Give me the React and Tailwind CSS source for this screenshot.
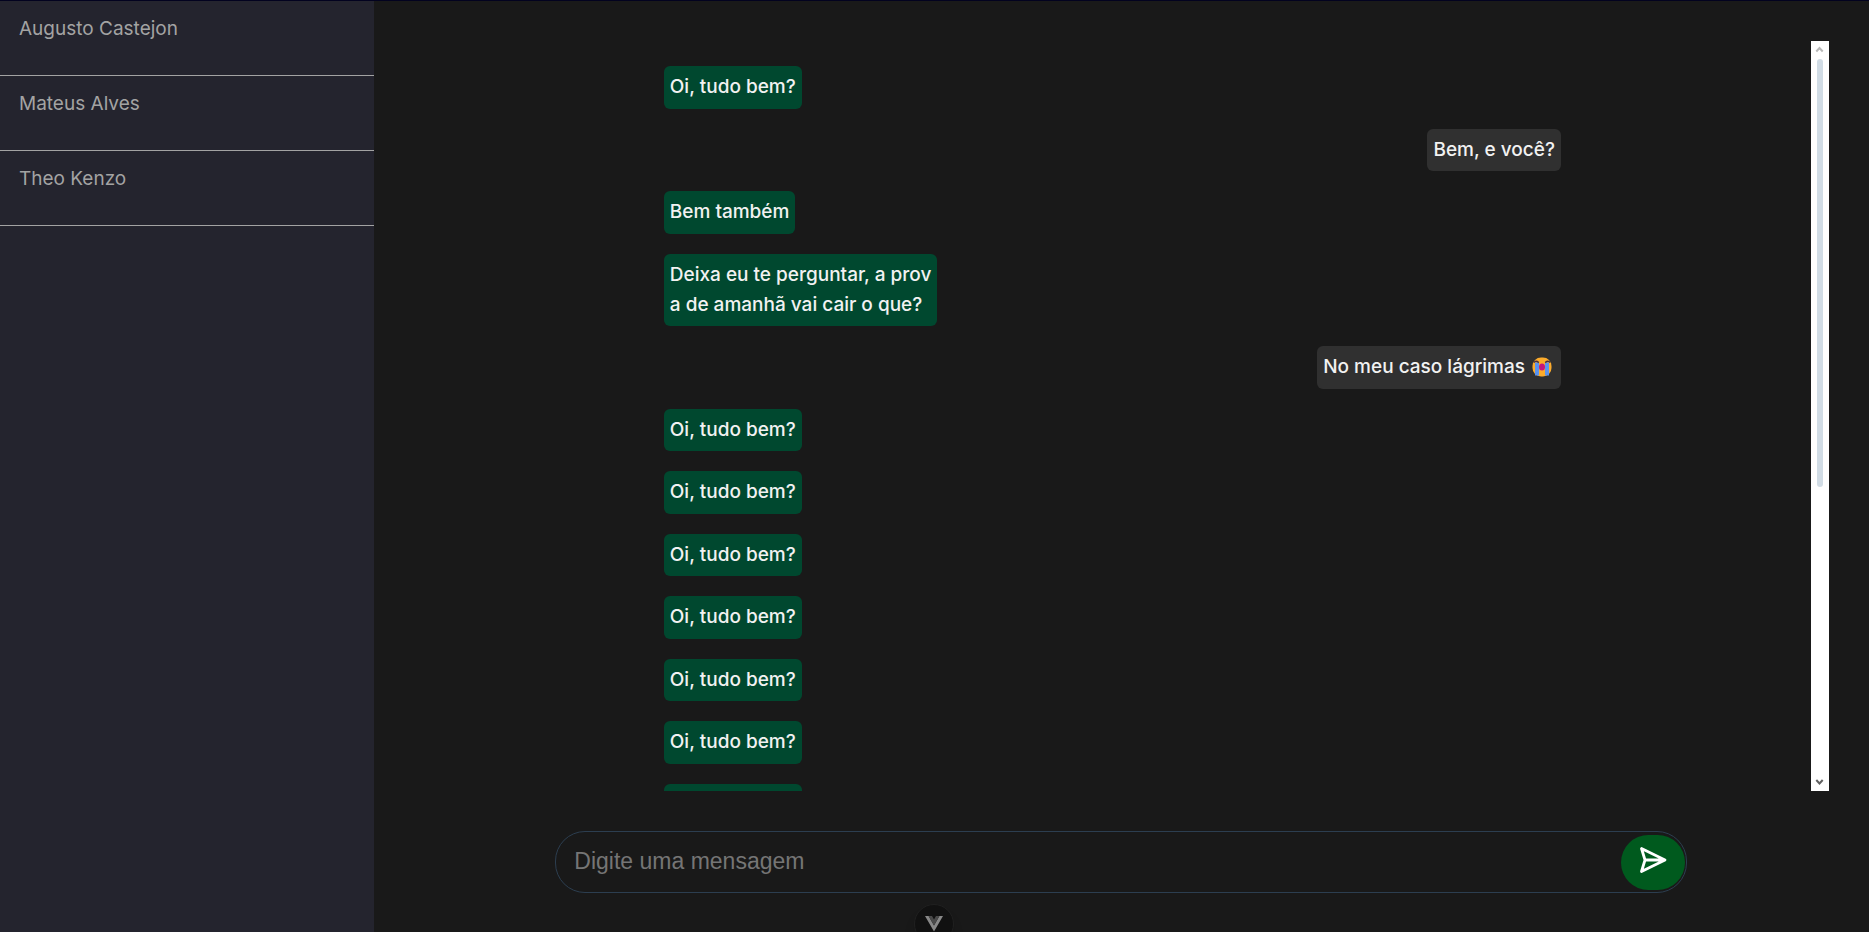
const contacts = ["Augusto Castejon", "Mateus Alves", "Theo Kenzo"];

const messages = [
  { text: "Oi, tudo bem?" },
  { text: "Bem, e você?", mine: true },
  { text: "Bem também" },
  { text: "Deixa eu te perguntar, a prov\na de amanhã vai cair o que?" },
  { text: "No meu caso lágrimas", mine: true, crying: true },
  ...Array.from({ length: 14 }, () => ({ text: "Oi, tudo bem?" })),
];

function CryingFace() {
  return (
    <svg viewBox="0 0 20 20" className="mr-[3px] ml-[7px] inline-block size-5 align-[-4px]" role="img" aria-label="chorando">
      <rect x="0.5" y="0.5" width="19" height="19" rx="8.5" fill="#fbab2c" />
      <rect x="3" y="5.5" width="4" height="13" fill="#5a93ef" />
      <rect x="13" y="5.5" width="4" height="13" fill="#5a93ef" />
      <path d="M1.8 5.6Q3.8 3 6.8 5.6M13.2 5.6Q16.2 3 18.2 5.6" fill="none" stroke="#4a3040" strokeWidth="1.4" />
      <ellipse cx="10" cy="10" rx="3" ry="3.6" fill="#c4177c" />
    </svg>
  );
}

function Scrollbar() {
  return (
    <div aria-hidden="true" className="flex w-[18px] shrink-0 flex-col items-center bg-white">
      <svg viewBox="0 0 18 18" className="size-[18px] shrink-0" fill="none" stroke="#b8b8b8" strokeWidth="2">
        <path d="M5.3 10.5 8.5 7l3.2 3.5" />
      </svg>
      <div className="w-[6px] flex-[3] rounded-full bg-[#d1dce5]" />
      <div className="flex-[2]" />
      <svg viewBox="0 0 18 18" className="size-[18px] shrink-0" fill="none" stroke="#606060" strokeWidth="2">
        <path d="M5.3 7 8.5 10.5 11.7 7" />
      </svg>
    </div>
  );
}

export default function App() {
  return (
    <div className="flex h-screen overflow-hidden border-t border-[#02021f] bg-[#191919] font-['Inter',sans-serif] text-[19px] leading-[30px] font-medium">
      <nav className="w-1/5 shrink-0 bg-[#24242e]">
        <ul>
          {contacts.map((name) => (
            <li key={name}>
              <a href="#" className="block h-[75px] border-b border-[#a3a3a3] px-[19px] pt-[13px] font-normal text-[#a3a3a3]">
                {name}
              </a>
            </li>
          ))}
        </ul>
      </nav>

      <main className="relative flex min-w-0 flex-1 flex-col p-10">
        <section className="flex h-[750px] shrink-0">
          <ul className="flex min-w-0 flex-1 flex-col gap-5 overflow-y-auto px-[250px] py-[25px] [scrollbar-width:none]">
            {messages.map((m, i) => (
              <li
                key={i}
                className={`max-w-[280px] shrink-0 rounded-md px-[6px] pt-[6px] pb-[6px] whitespace-pre-line text-[#f2f2f2] odd:pb-[7px] ${
                  m.mine ? "self-end bg-[#303030]" : "self-start bg-[#00482f]"
                }`}
              >
                {m.text}
                {m.crying && <CryingFace />}
              </li>
            ))}
          </ul>
          <Scrollbar />
        </section>

        <form
          onSubmit={(e) => e.preventDefault()}
          className="mt-10 flex h-[62px] w-4/5 shrink-0 items-center self-center rounded-[30px] border border-[#2c3e50] pr-px"
        >
          <input
            type="text"
            aria-label="Digite uma mensagem"
            placeholder="Digite uma mensagem"
            className="h-full min-w-0 flex-1 bg-transparent pb-0.5 pl-[18px] font-['Liberation_Sans',sans-serif] text-[23px] font-normal text-white outline-none placeholder:text-[#757575]"
          />
          <button
            type="submit"
            aria-label="Enviar"
            className="flex h-[55px] w-[64px] shrink-0 items-center justify-center rounded-[30px] bg-[#005a1e]"
          >
            <svg viewBox="0 0 28 28" className="mb-1 size-7" fill="none" stroke="#fff" strokeWidth="2.8" strokeLinecap="round" strokeLinejoin="round">
              <path d="M2.5 2.5 26 14 2.5 25.5 6 14ZM6 14H25" />
            </svg>
          </button>
        </form>

        <button
          type="button"
          aria-label="Vue DevTools"
          className="absolute top-[903px] left-[540px] flex size-10 items-center justify-center rounded-full border border-[#202020] bg-[#111] shadow-lg"
        >
          <svg viewBox="0 0 18 16" className="h-4 w-[18px]">
            <path d="M0 0H3.6L9 9.4 14.4 0H18L9 15.6Z" fill="#888" />
            <path d="M3.6 0H7L9 3.4 11 0H14.4L9 9.4Z" fill="#4a4a4a" />
          </svg>
        </button>
      </main>
    </div>
  );
}
